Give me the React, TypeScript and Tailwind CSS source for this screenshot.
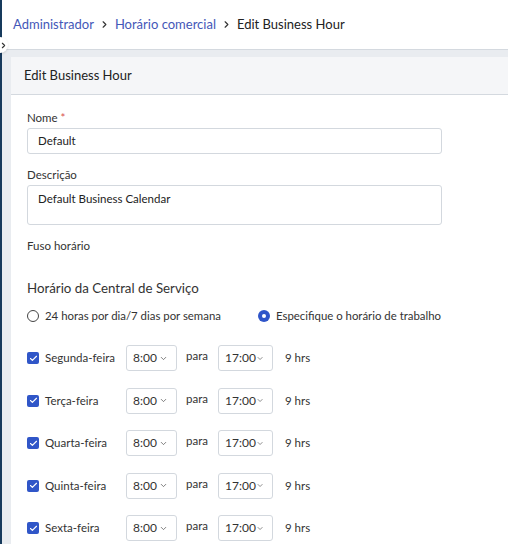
import { ChevronDown, ChevronRight, Check } from "lucide-react";

const days = ["Segunda-feira", "Terça-feira", "Quarta-feira", "Quinta-feira", "Sexta-feira"];

function TimeSelect({ value, width }: { value: string; width: string }) {
  return (
    <div
      className={`flex h-[26px] ${width} items-center justify-between rounded-[3px] border border-[#d3d8de] bg-white pl-[6px] pr-[8px] text-[12px] text-[#333]`}
    >
      <span>{value}</span>
      <ChevronDown size={9} strokeWidth={2} className="text-[#555]" />
    </div>
  );
}

export default function App() {
  return (
    <div className="relative flex h-[544px] w-[508px] overflow-hidden whitespace-nowrap bg-white font-['Lato',sans-serif] text-[#222]">
      <div className="w-[2px] shrink-0 bg-[#173a5c]" />

      {/* sidebar toggle, half hidden */}
      <div className="absolute left-[-8px] top-[37px] flex h-[16px] w-[16px] items-center justify-center rounded-full bg-white shadow-sm">
        <ChevronRight size={9} strokeWidth={3} className="ml-[6px] text-[#333]" />
      </div>

      <div className="flex min-w-0 flex-1 flex-col">
        <div className="flex h-[49px] shrink-0 items-center gap-[5px] pl-[11px] text-[13px]">
          <span className="text-[#4457b8]">Administrador</span>
          <ChevronRight size={11} strokeWidth={2.5} className="text-[#333]" />
          <span className="text-[#4457b8]">Horário comercial</span>
          <ChevronRight size={11} strokeWidth={2.5} className="text-[#333]" />
          <span className="text-[#222]">Edit Business Hour</span>
        </div>

        <div className="flex-1 border-t border-[#d4d9df] bg-[#e9ecf0] pl-[9px] pt-[7px]">
          <div className="h-full bg-white">
            <div className="flex h-[38px] items-center border-b border-[#d4d9df] bg-[#f5f6f8] pl-[13px] text-[13px] text-[#222]">
              Edit Business Hour
            </div>

            <div className="w-[431px] pl-[16px] pt-[15px]">
              <div className="text-[11.5px] leading-[16px] text-[#333]">
                Nome <span className="text-[#d9534f]">*</span>
              </div>
              <div className="mt-[2px] flex h-[26px] items-center rounded-[3px] border border-[#d3d8de] pl-[10px] text-[11.5px] text-[#222]">
                Default
              </div>

              <div className="mt-[13px] text-[11.5px] leading-[16px] text-[#333]">Descrição</div>
              <div className="mt-[2px] h-[40px] rounded-[3px] border border-[#d3d8de] pl-[10px] pt-[5px] text-[11.5px] leading-[16px] text-[#222]">
                Default Business Calendar
              </div>

              <div className="mt-[13px] text-[11.5px] leading-[16px] text-[#333]">Fuso horário</div>

              <div className="mt-[25px] text-[13.3px] leading-[18px] text-[#333]">Horário da Central de Serviço</div>

              <div className="mt-[11px] flex items-center text-[11.4px] leading-[16px] text-[#333]">
                <div className="flex w-[231px] items-center gap-[6px]">
                  <span className="h-[12px] w-[12px] rounded-full border border-[#444]" />
                  <span>24 horas por dia/7 dias por semana</span>
                </div>
                <div className="flex items-center gap-[6px]">
                  <span className="flex h-[12px] w-[12px] items-center justify-center rounded-full bg-[#2f55c9]">
                    <span className="h-[4px] w-[4px] rounded-full bg-white" />
                  </span>
                  <span>Especifique o horário de trabalho</span>
                </div>
              </div>

              <div className="mt-[21px] flex flex-col gap-[16.5px]">
                {days.map((d) => (
                  <div key={d} className="flex items-center text-[11.5px] text-[#333]">
                    <span className="flex h-[12px] w-[12px] items-center justify-center rounded-[2px] bg-[#3056c8]">
                      <Check size={9} strokeWidth={3} className="text-white" />
                    </span>
                    <span className="ml-[6px] w-[81px]">{d}</span>
                    <TimeSelect value="8:00" width="w-[51px]" />
                    <span className="ml-[9px] w-[32px] -translate-y-[2px]">para</span>
                    <TimeSelect value="17:00" width="w-[55px]" />
                    <span className="ml-[12px]">9 hrs</span>
                  </div>
                ))}
              </div>
            </div>
          </div>
        </div>
      </div>
    </div>
  );
}
